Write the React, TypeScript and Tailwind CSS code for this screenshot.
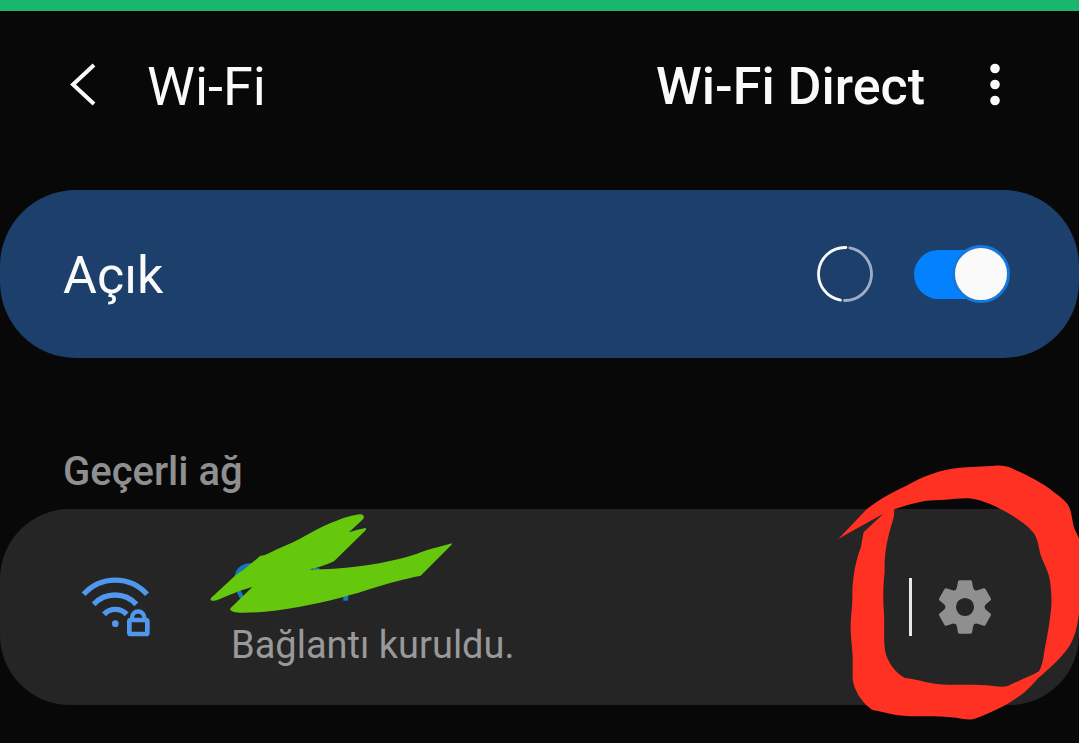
import { useState } from "react";

const BackIcon = () => (
  <svg width="28" height="44" viewBox="0 0 28 44" fill="none" stroke="#fafafa" strokeWidth="4">
    <path d="M25 2 4 21.500 25 41" />
  </svg>
);

const MoreIcon = () => (
  <svg width="12" height="44" viewBox="0 0 12 44" fill="#fafafa">
    <circle cx="6" cy="5.500" r="4.800" />
    <circle cx="6" cy="21.500" r="4.800" />
    <circle cx="6" cy="37.500" r="4.800" />
  </svg>
);

const Spinner = () => (
  <svg width="56" height="56" viewBox="0 0 56 56" fill="none" strokeWidth="2.800" strokeLinecap="round" role="img" aria-label="Taranıyor">
    <path d="M28.900 1.520A26.500 26.500 0 0 0 23.400 54.100" stroke="#fafafa" />
    <path d="M32.800 1.940A26.500 26.500 0 0 1 27.500 54.500" stroke="#a0adca" />
  </svg>
);

const WifiLockIcon = () => (
  <svg width="72" height="62" viewBox="60 225 216 186" fill="none" stroke="#4f98ee" strokeWidth="16" className="shrink-0">
    <path d="M71 280a127 127 0 0 1 190 0" />
    <path d="M101 310a87 87 0 0 1 128 0" />
    <path d="M132 340a46 46 0 0 1 68 0" />
    <circle cx="166" cy="368" r="10" fill="#4f98ee" stroke="none" />
    <rect x="208" y="357" width="54" height="42" rx="4" strokeWidth="14" />
    <path d="M216 356v-6a18.500 18.500 0 0 1 37 0v6" strokeWidth="13" />
  </svg>
);

const GearIcon = () => (
  <svg width="56" height="56" viewBox="-85 -85 170 170" fill="#8f8f8f">
    <circle r="43" fill="none" stroke="#8f8f8f" strokeWidth="31" />
    {[0, 60, 120, 180, 240, 300].map((angle) => (
      <path
        key={angle}
        transform={`rotate(${angle})`}
        d="M-38 -44Q-27 -50 -25 -58L-21 -78Q-20 -81 -16 -81H16Q20 -81 21 -78L25 -58Q27 -50 38 -44Z"
      />
    ))}
  </svg>
);

const GreenScribble = () => (
  <svg width="330" height="180" viewBox="0 0 990 540" className="absolute left-[200px] -top-[9px] pointer-events-none" aria-hidden="true">
    {/* visible remains of the network name */}
    <g fill="none" stroke="#1478bf" strokeWidth="13">
      <path d="M165 199C140 190 112 203 110 232C110 262 116 284 132 300" />
      <path d="M437 285v17" strokeWidth="15" />
      <path d="M340 207h18" strokeWidth="8" />
    </g>
    <path
      fill="#65c80d"
      d="M32 300C30 296 36 291 42 286L105 227Q145 200 180 168Q195 166 210 158C240 142 270 132 300 116C340 94 370 76 410 62C440 50 462 45 480 43C490 42 495 50 489 58L447 97Q473 88 497 84Q500 88 494 94L402 184Q370 199 328 209C430 207 520 196 600 176C640 167 665 154 695 146Q725 139 756 130L754 135L662 227C610 238 570 248 530 261C460 284 380 306 300 320C240 331 180 338 130 338C100 338 86 332 92 324L157 261C115 273 85 286 58 298Q38 306 32 300Z"
    />
  </svg>
);

const RedScribble = () => (
  <svg width="259" height="303" viewBox="0 0 777 909" className="absolute right-0 -top-[69px] pointer-events-none" aria-hidden="true">
    <path
      fill="#ff3122"
      fillRule="evenodd"
      d="M55 297L140 208C180 176 220 156 262 136C305 110 360 90 412 84C450 80 490 80 525 77C545 76 562 78 575 85C620 105 665 127 700 155C725 173 744 188 749 205C757 228 757 245 762 263L777 295V520C772 560 765 590 750 615C725 655 685 688 655 714C640 730 620 755 595 770C560 795 520 815 470 834C455 840 445 839 430 837C400 832 370 829 340 829H275C230 829 195 817 160 811C130 795 100 750 98 715V650C96 610 91 590 92 550C93 520 98 495 97 465C97 410 108 360 123 320Q126 300 131 277L190 221C145 247 100 270 55 297ZM222 208C250 199 285 187 320 182C350 179 380 180 405 176C430 174 455 173 475 180C510 190 530 201 560 217C590 235 615 250 635 272C655 292 655 320 662 345C672 375 688 395 691 430C694 460 697 490 691 525C687 565 678 605 672 640C670 660 665 680 657 694C630 710 600 720 565 737C550 742 535 740 520 738C470 731 400 738 345 731C310 726 285 717 255 714C225 700 199 660 195 630C190 590 194 560 192 520C188 470 190 430 194 395C192 340 203 290 219 240Q224 225 222 208Z"
    />
  </svg>
);

export default function App() {
  const [enabled, setEnabled] = useState(true);

  return (
    <div className="min-h-screen overflow-hidden bg-[#080808] font-[Roboto,sans-serif] text-[#fafafa]">
      <div className="h-[11px] bg-[#19b76e]" />

      <header className="flex items-center pt-[42px] pb-[73px] pl-[69px] pr-[78px]">
        <button type="button" aria-label="Geri">
          <BackIcon />
        </button>
        <h1 className="ml-[50px] pt-1 text-[54px] leading-[60px]">Wi-Fi</h1>
        <button type="button" className="ml-auto pt-1 text-[52px] leading-[60px] font-medium">
          Wi-Fi Direct
        </button>
        <button type="button" aria-label="Diğer seçenekler" className="ml-16">
          <MoreIcon />
        </button>
      </header>

      <main>
        <section className="flex h-[168px] items-center rounded-[76px] bg-[#1c406b] pl-[63px] pr-[69px]">
          <label htmlFor="wifi" className="pt-1 text-[52px] leading-[60px]">
            Açık
          </label>
          <div className="ml-auto flex items-center gap-[41px]">
            <Spinner />
            <label className="relative flex h-[58px] w-24 cursor-pointer items-center">
              <input
                id="wifi"
                type="checkbox"
                role="switch"
                checked={enabled}
                onChange={(e) => setEnabled(e.target.checked)}
                className="peer sr-only"
              />
              <span className="h-[49px] w-[92px] rounded-full bg-[#5c6d80] peer-checked:bg-[#0381fe]" />
              <span className="absolute left-0 size-[58px] rounded-full border-3 border-[#5c6d80] bg-[#fafafa] peer-checked:left-auto peer-checked:right-0 peer-checked:border-[#1578dc]" />
            </label>
          </div>
        </section>

        <h2 className="mt-[90px] mb-[13px] pl-[63px] text-[40px] leading-[48px] font-medium text-[#8f8f8f]">Geçerli ağ</h2>

        <section className="relative flex h-[196px] items-center rounded-[70px] bg-[#252525] pl-20 pr-[86px]">
          <WifiLockIcon />
          <p className="ml-[79px] pt-[75px] text-[38px] leading-[44px] text-[#999999]">Bağlantı kuruldu.</p>
          <div className="ml-auto flex items-center gap-[25px]">
            <span className="h-[58px] w-[3px] bg-[#e8e8e8]" />
            <button type="button" aria-label="Ağ ayarları">
              <GearIcon />
            </button>
          </div>
          <GreenScribble />
          <RedScribble />
        </section>
      </main>
    </div>
  );
}
